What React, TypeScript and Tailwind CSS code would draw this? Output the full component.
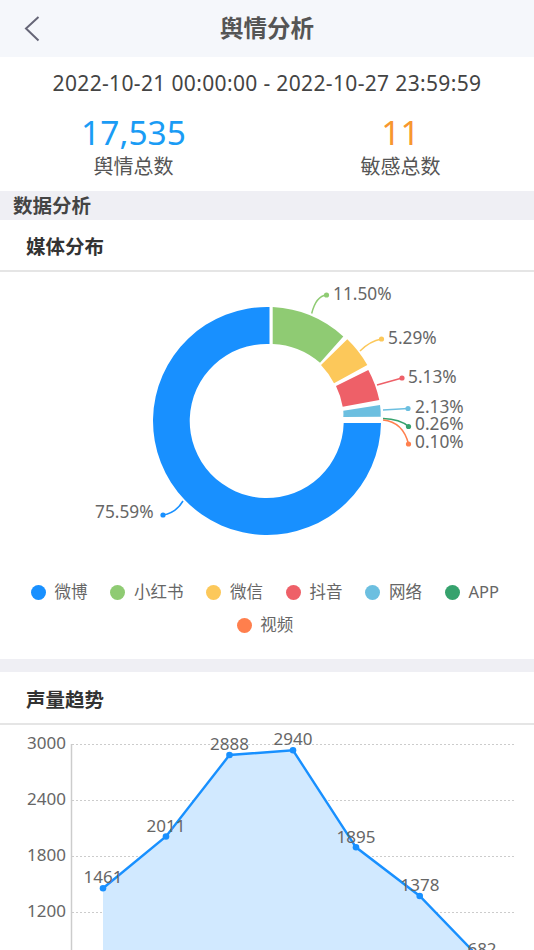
const legend = [
  ["微博", "#1890ff"],
  ["小红书", "#8fcb73"],
  ["微信", "#fcc85a"],
  ["抖音", "#ee6068"],
  ["网络", "#6cbfe0"],
  ["APP", "#36a26d"],
  ["视频", "#ff7f4d"],
];

const pts: [number, number, string, number, number][] = [
  [103, 888.3, "1461", 103, 883],
  [166, 836.5, "2011", 166, 832],
  [229.5, 755, "2888", 229.5, 750],
  [293, 750.3, "2940", 293, 745],
  [356, 847.3, "1895", 356, 843],
  [419.7, 896, "1378", 420, 891],
  [482.5, 961, "682", 482, 955],
];

function Donut() {
  return (
    <svg width="534" height="296" viewBox="0 272 534 296" className="block" fontFamily="'Noto Sans','Noto Sans CJK SC',sans-serif">
      <path d="M381 423A114 114 0 1 1 269.5 307V344A77 77 0 1 0 343.7 423Z" fill="#1890ff" />
      <path d="M272.7 307A114 114 0 0 1 343.3 336.4L320 362.8A77 77 0 0 0 272.7 344Z" fill="#8fcb73" />
      <path d="M347.3 339.3A114 114 0 0 1 367.3 365L334 383.3A77 77 0 0 0 321 365Z" fill="#fcc85a" />
      <path d="M368.3 370A114 114 0 0 1 379.3 400L342.7 406.7A77 77 0 0 0 336 386Z" fill="#ee6068" />
      <path d="M380 405Q381 411 380.7 416.7L343.3 417Q343.6 414 343.3 410.7Z" fill="#6cbfe0" />

      <g fill="none" strokeWidth="1.5">
        <path d="M311.7 313.5Q316 296 326.5 295" stroke="#8fcb73" />
        <path d="M360 351Q370 341 381.5 339" stroke="#fcc85a" />
        <path d="M377 385L402 378" stroke="#ee6068" />
        <path d="M383 410L408 408.5" stroke="#6cbfe0" />
        <path d="M383 418.5Q400 419 408.5 426.5" stroke="#36a26d" />
        <path d="M383 420Q403 422 408.5 444" stroke="#ff7f4d" />
        <path d="M183 501Q176 513 163 515" stroke="#1890ff" />
      </g>
      <circle cx="326.5" cy="295" r="2.6" fill="#8fcb73" />
      <circle cx="381.5" cy="339" r="2.6" fill="#fcc85a" />
      <circle cx="402" cy="378" r="2.6" fill="#ee6068" />
      <circle cx="408" cy="408.5" r="2.6" fill="#6cbfe0" />
      <circle cx="408.5" cy="426.5" r="2.6" fill="#36a26d" />
      <circle cx="408.5" cy="444" r="2.6" fill="#ff7f4d" />
      <circle cx="163" cy="515" r="2.6" fill="#1890ff" />

      <g fill="#666" fontSize="17.3">
        <text x="333" y="299.5">11.50%</text>
        <text x="388" y="343.5">5.29%</text>
        <text x="408" y="382.5">5.13%</text>
        <text x="415" y="413">2.13%</text>
        <text x="415" y="430">0.26%</text>
        <text x="415" y="448">0.10%</text>
        <text x="95" y="518">75.59%</text>
      </g>
    </svg>
  );
}

function Trend() {
  const line = pts.map((p) => `${p[0]},${p[1]}`).join(" ");
  const area = `M103 888.3 ${pts.map((p) => `L${p[0]} ${p[1]}`).join(" ")} L482.5 1000 L103 1000Z`;
  return (
    <svg width="534" height="225" viewBox="0 725 534 225" className="block" fontFamily="'Noto Sans','Noto Sans CJK SC',sans-serif">
      {[744.5, 800.5, 856.5, 912.5].map((y) => (
        <line key={y} x1="72" x2="515" y1={y} y2={y} stroke="#ccc" strokeWidth="1" strokeDasharray="2 2" />
      ))}
      <line x1="71.5" x2="71.5" y1="744" y2="950" stroke="#ccc" strokeWidth="1.5" />
      <path d={area} fill="#d1e9ff" />
      <polyline points={line} fill="none" stroke="#1890ff" strokeWidth="2.4" />
      {pts.map((p) => (
        <circle key={p[2]} cx={p[0]} cy={p[1]} r="3.3" fill="#1890ff" />
      ))}
      <g fill="#666" fontSize="17" textAnchor="end">
        <text x="66" y="749">3000</text>
        <text x="66" y="805">2400</text>
        <text x="66" y="861">1800</text>
        <text x="66" y="917">1200</text>
      </g>
      <g fill="#666" fontSize="17" textAnchor="middle">
        {pts.map((p) => (
          <text key={p[2]} x={p[3]} y={p[4]}>{p[2]}</text>
        ))}
      </g>
    </svg>
  );
}

export default function App() {
  return (
    <div className="h-[950px] w-[534px] overflow-hidden bg-white font-['Noto_Sans','Noto_Sans_CJK_SC',sans-serif]">
      <header className="relative flex h-[57px] items-center justify-center bg-[#f5f7fb]">
        <svg className="absolute left-[24px] top-[16px]" width="16" height="26" viewBox="0 0 16 26" fill="none">
          <path d="M14.5 1L2 12.5L14.5 24.5" stroke="#667" strokeWidth="2" />
        </svg>
        <h1 className="text-[23.5px] font-bold text-[#555]">舆情分析</h1>
      </header>
      <div className="flex h-[54px] items-center justify-center text-[21px] tracking-[0.35px] whitespace-nowrap text-[#444]">
        2022-10-21 00:00:00 - 2022-10-27 23:59:59
      </div>
      <div className="grid h-[80px] grid-cols-2">
        <div className="flex flex-col items-center">
          <span className="text-[33.5px] leading-[42px] text-[#1a9cf5]">17,535</span>
          <span className="text-[20px] leading-[28px] text-[#555]">舆情总数</span>
        </div>
        <div className="flex flex-col items-center">
          <span className="text-[33.5px] leading-[42px] text-[#f7972e]">11</span>
          <span className="text-[20px] leading-[28px] text-[#555]">敏感总数</span>
        </div>
      </div>
      <div className="flex h-[29px] items-center bg-[#efeff4] pl-[13px] text-[19.5px] font-bold text-[#444]">数据分析</div>
      <div className="flex h-[52px] items-center border-b-2 border-[#e5e5e5] pt-[3px] pl-[26px] text-[19.5px] font-bold text-[#333]">媒体分布</div>
      <Donut />
      <div className="flex h-[91px] flex-wrap content-start justify-center gap-x-[23px] pt-[8px] pr-[22px] pl-[18px] text-[16.5px] text-[#666]">
        {legend.map(([label, color]) => (
          <div key={label} className="flex h-[33px] items-center gap-[8.5px]">
            <span className="size-[15px] rounded-full" style={{ backgroundColor: color }} />
            <span>{label}</span>
          </div>
        ))}
      </div>
      <div className="h-[13px] bg-[#efeff4]" />
      <div className="flex h-[53px] items-center border-b-2 border-[#e5e5e5] pt-[4px] pl-[26px] text-[19.5px] font-bold text-[#333]">声量趋势</div>
      <Trend />
    </div>
  );
}
